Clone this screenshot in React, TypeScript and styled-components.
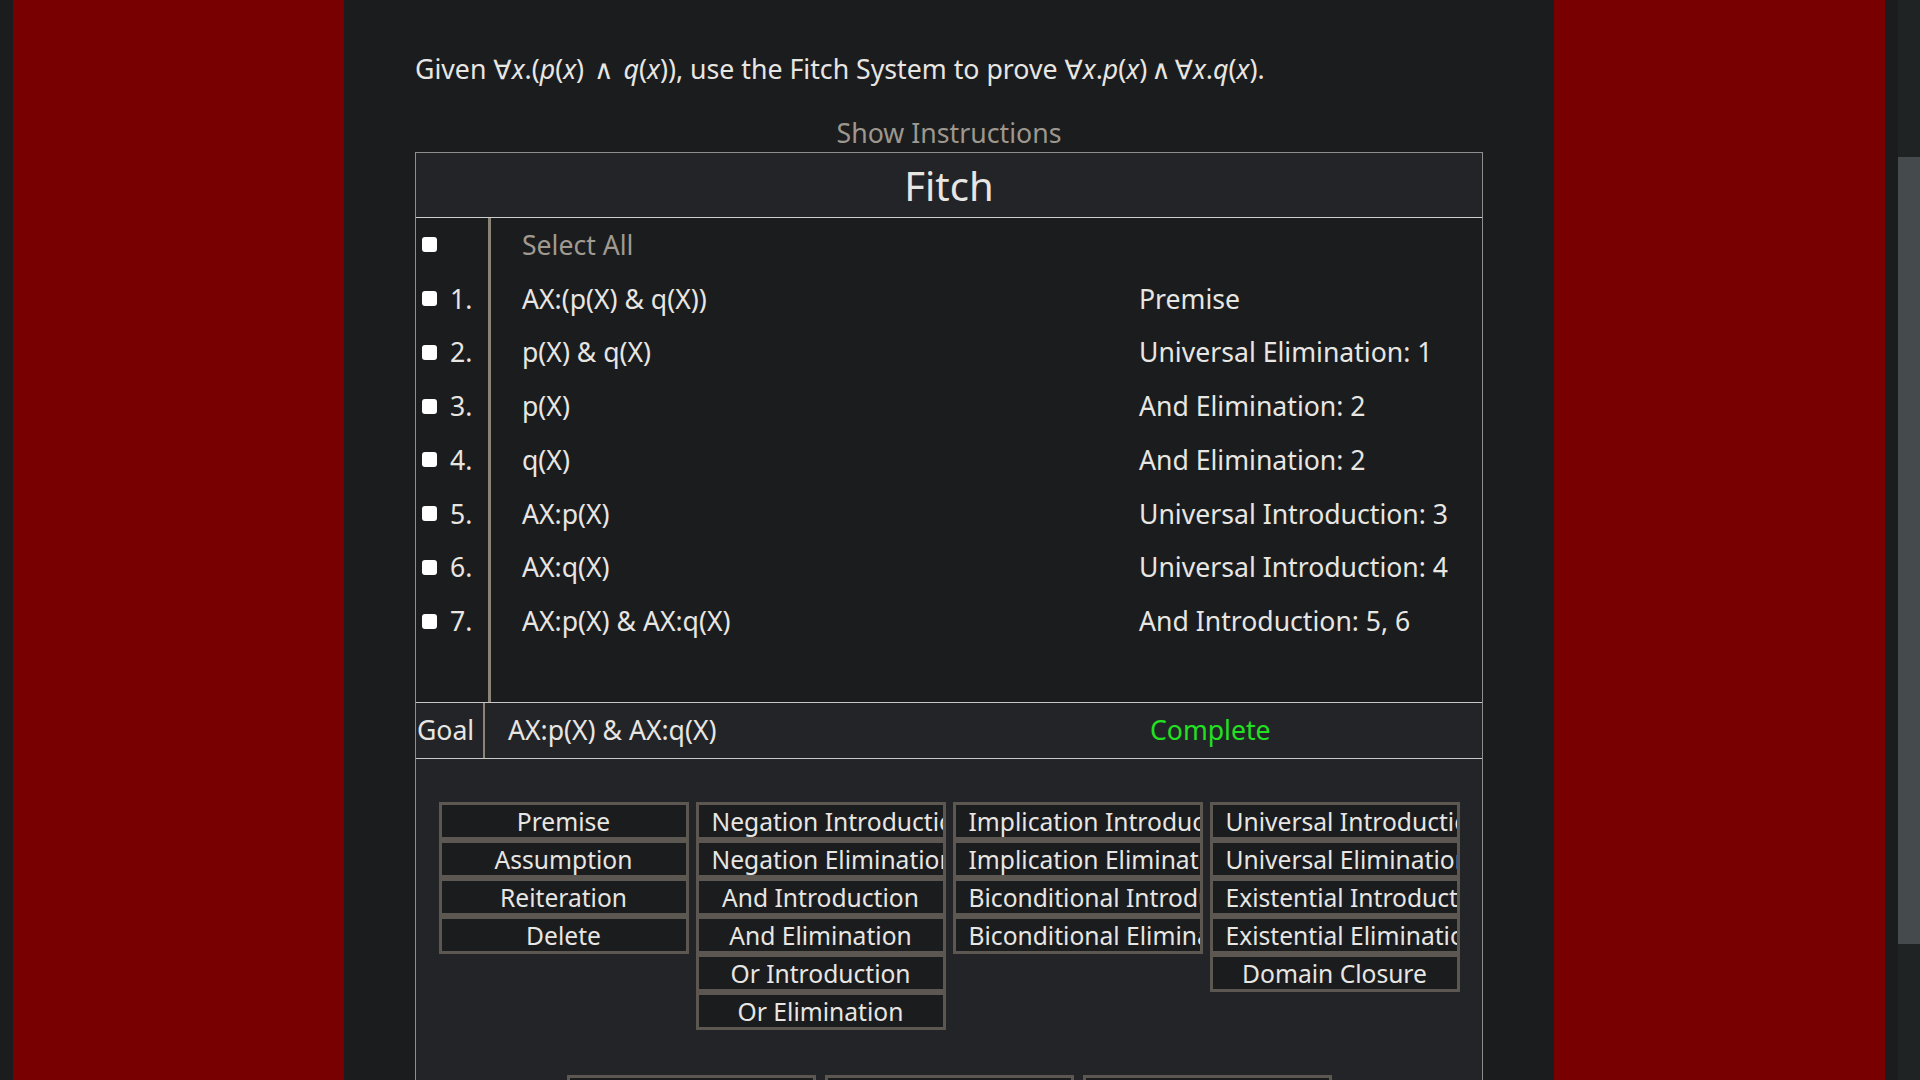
import styled, { createGlobalStyle } from 'styled-components'

const GlobalStyle = createGlobalStyle`
  html, body {
    margin: 0;
    background: #1b1c1e;
    color: #e8e6e3;
    font-family: "Noto Sans", "Open Sans", "DejaVu Sans", sans-serif;
  }
`

const Viewport = styled.div`
  display: flex;
  height: 100vh;
  overflow: hidden;
`

const Scroller = styled.div`
  flex: 1;
  overflow-y: auto;
  scrollbar-width: none;
`

const ScrollTrack = styled.div`
  width: 22px;
  flex: none;
  box-sizing: border-box;
  padding-top: 157px;
  background: #202324;
`

const ScrollThumb = styled.div`
  height: 787px;
  background: #454a4d;
`

const Page = styled.div`
  padding: 0 13px;
`

const Backdrop = styled.div`
  background: #780000;
  display: flex;
  justify-content: center;
  min-height: 100vh;
`

const Main = styled.main`
  width: 1210px;
  box-sizing: border-box;
  background: #1b1c1e;
  padding: 51px 71px 330px;
`

const Prompt = styled.p`
  margin: 0;
  font-size: 26.7px;
  line-height: 36px;
`

const Var = styled.i`
  font-style: italic;
`

const Op = styled.span<{ $wide?: boolean }>`
  margin: 0 ${(props) => (props.$wide ? '10px' : '4px')};
`

const ShowInstructions = styled.div`
  margin-top: 28px;
  text-align: center;
  color: #9d978e;
  font-size: 26.7px;
  line-height: 36px;
  cursor: pointer;
`

const FitchBox = styled.section`
  margin-top: 1px;
  border: 1px solid #8f8f8f;
  background: #1b1c1e;
`

const Header = styled.header`
  height: 64px;
  display: flex;
  align-items: center;
  justify-content: center;
  font-size: 40px;
  background: #232427;
  border-bottom: 1px solid #cfcfcf;
`

const LineRow = styled.div`
  display: grid;
  grid-template-columns: 75px 648px 1fr;
  height: 53.75px;
  font-size: 26.6px;
`

const NumCell = styled.div`
  display: flex;
  align-items: center;
  gap: 13px;
  padding-left: 6px;
  border-right: 3px solid #8b8378;
`

const Check = styled.input`
  appearance: none;
  width: 15px;
  height: 15px;
  margin: 0;
  background: #ffffff;
  border-radius: 3px;
  flex: none;
`

const FormulaCell = styled.div<{ $muted?: boolean }>`
  display: flex;
  align-items: center;
  padding-left: 31px;
  color: ${(props) => (props.$muted ? '#a09a91' : '#e8e6e3')};
`

const RuleCell = styled.div`
  display: flex;
  align-items: center;
`

const GoalRow = styled.div`
  display: grid;
  grid-template-columns: 69px 665px 1fr;
  height: 55px;
  background: #232427;
  border-top: 1px solid #c8c8c8;
  border-bottom: 1px solid #c8c8c8;
  font-size: 26.6px;
`

const GoalLabel = styled.div`
  display: flex;
  align-items: center;
  padding-left: 1px;
  border-right: 2px solid #8b8378;
`

const GoalFormula = styled.div`
  display: flex;
  align-items: center;
  padding-left: 23px;
`

const Status = styled.div`
  display: flex;
  align-items: center;
  color: #22e022;
`

const ButtonArea = styled.div`
  background: #232427;
  padding: 43px 22px 40px;
`

const RuleGrid = styled.div`
  display: grid;
  grid-template-columns: repeat(4, 250px);
  column-gap: 7px;
  justify-content: center;
  align-items: start;
`

const RuleColumn = styled.div`
  display: flex;
  flex-direction: column;
`

const RuleButton = styled.button`
  display: block;
  width: 100%;
  height: 38px;
  box-sizing: border-box;
  border: 3px solid #5c5750;
  background: #1b1c1e;
  color: #e8e6e3;
  font-family: "Noto Sans", "Open Sans", sans-serif;
  font-size: 24.6px;
  padding: 0 13px;
  text-align: center;
  white-space: nowrap;
  overflow: hidden;
  cursor: pointer;
`

const BottomBar = styled.div`
  display: flex;
  justify-content: center;
  gap: 9px;
  margin-top: 45px;
`

const ActionButton = styled(RuleButton)`
  width: 249px;
`

const lines = [
  { formula: 'AX:(p(X) & q(X))', rule: 'Premise' },
  { formula: 'p(X) & q(X)', rule: 'Universal Elimination: 1' },
  { formula: 'p(X)', rule: 'And Elimination: 2' },
  { formula: 'q(X)', rule: 'And Elimination: 2' },
  { formula: 'AX:p(X)', rule: 'Universal Introduction: 3' },
  { formula: 'AX:q(X)', rule: 'Universal Introduction: 4' },
  { formula: 'AX:p(X) & AX:q(X)', rule: 'And Introduction: 5, 6' },
]

const ruleColumns = [
  ['Premise', 'Assumption', 'Reiteration', 'Delete'],
  [
    'Negation Introduction',
    'Negation Elimination',
    'And Introduction',
    'And Elimination',
    'Or Introduction',
    'Or Elimination',
  ],
  [
    'Implication Introduction',
    'Implication Elimination',
    'Biconditional Introduction',
    'Biconditional Elimination',
  ],
  [
    'Universal Introduction',
    'Universal Elimination',
    'Existential Introduction',
    'Existential Elimination',
    'Domain Closure',
  ],
]

function App() {
  return (
    <>
      <GlobalStyle />
      <Viewport>
        <Scroller>
          <Page>
            <Backdrop>
              <Main>
                <Prompt>
                  Given ∀<Var>x</Var>.(<Var>p</Var>(<Var>x</Var>)
                  <Op $wide>∧</Op>
                  <Var>q</Var>(<Var>x</Var>)), use the Fitch System to prove ∀
                  <Var>x</Var>.<Var>p</Var>(<Var>x</Var>)<Op>∧</Op>∀
                  <Var>x</Var>.<Var>q</Var>(<Var>x</Var>).
                </Prompt>
                <ShowInstructions>Show Instructions</ShowInstructions>

                <FitchBox>
                  <Header>Fitch</Header>

                  <LineRow>
                    <NumCell>
                      <Check type="checkbox" />
                    </NumCell>
                    <FormulaCell $muted>Select All</FormulaCell>
                    <RuleCell />
                  </LineRow>
                  {lines.map((line, i) => (
                    <LineRow key={i}>
                      <NumCell>
                        <Check type="checkbox" />
                        {i + 1}.
                      </NumCell>
                      <FormulaCell>{line.formula}</FormulaCell>
                      <RuleCell>{line.rule}</RuleCell>
                    </LineRow>
                  ))}
                  <LineRow>
                    <NumCell />
                    <FormulaCell />
                    <RuleCell />
                  </LineRow>

                  <GoalRow>
                    <GoalLabel>Goal</GoalLabel>
                    <GoalFormula>AX:p(X) &amp; AX:q(X)</GoalFormula>
                    <Status>Complete</Status>
                  </GoalRow>

                  <ButtonArea>
                    <RuleGrid>
                      {ruleColumns.map((col, i) => (
                        <RuleColumn key={i}>
                          {col.map((name) => (
                            <RuleButton key={name}>{name}</RuleButton>
                          ))}
                        </RuleColumn>
                      ))}
                    </RuleGrid>
                    <BottomBar>
                      <ActionButton>Undo</ActionButton>
                      <ActionButton>Redo</ActionButton>
                      <ActionButton>Check Proof</ActionButton>
                    </BottomBar>
                  </ButtonArea>
                </FitchBox>
              </Main>
            </Backdrop>
          </Page>
        </Scroller>
        <ScrollTrack>
          <ScrollThumb />
        </ScrollTrack>
      </Viewport>
    </>
  )
}

export default App
